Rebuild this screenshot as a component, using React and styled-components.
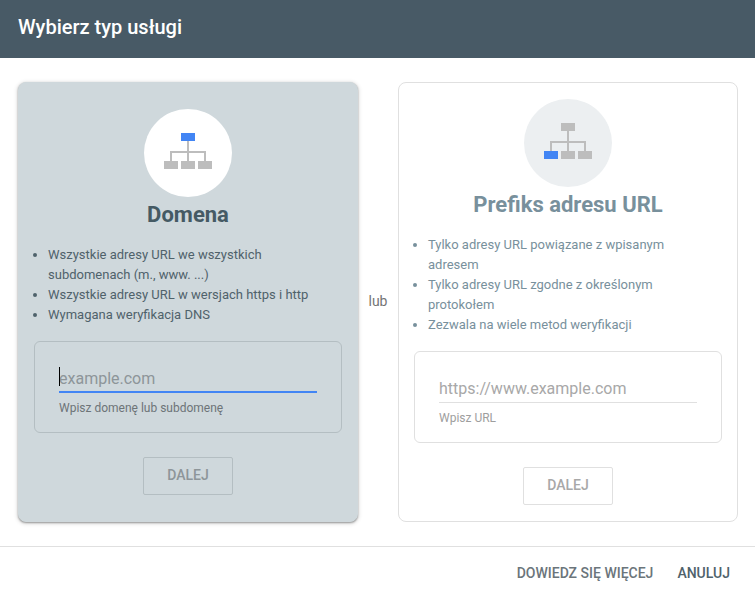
import React from "react";
import styled, { createGlobalStyle } from "styled-components";

const GlobalStyle = createGlobalStyle`
  html, body {
    margin: 0;
    padding: 0;
    background: #fff;
    font-family: Roboto, "Liberation Sans", sans-serif;
  }
  * {
    box-sizing: border-box;
  }
`;

const Page = styled.div`
  width: 755px;
  height: 595px;
  display: flex;
  flex-direction: column;
  overflow: hidden;
`;

const Header = styled.header`
  height: 58px;
  flex: none;
  display: flex;
  align-items: center;
  padding: 0 18px;
  background-color: #485a66;
  color: #fff;
`;

const Title = styled.h1`
  margin: 0 0 4px;
  font-size: 20px;
  font-weight: 500;
`;

const Main = styled.main`
  flex: 1;
  display: flex;
  align-items: stretch;
  padding: 24px 17px 24px 18px;
`;

const Card = styled.section`
  width: 340px;
  flex: none;
  display: flex;
  flex-direction: column;
  align-items: center;
  justify-content: center;
  border-radius: 8px;
  border: 1px solid ${(props) => (props.$active ? "#cfd8dc" : "#e0e0e0")};
  background-color: ${(props) => (props.$active ? "#cfd8dc" : "#fff")};
  box-shadow: ${(props) =>
    props.$active
      ? "0 1px 2px rgba(0,0,0,.35), 0 1px 4px 1px rgba(0,0,0,.12)"
      : "none"};
`;

const Or = styled.div`
  flex: 1;
  display: flex;
  align-items: center;
  justify-content: center;
  font-size: 14px;
  color: #757575;
  padding-bottom: 2px;
`;

const IconCircle = styled.div`
  width: 88px;
  height: 88px;
  display: flex;
  align-items: center;
  justify-content: center;
  border-radius: 50%;
  background-color: ${(props) => (props.$active ? "#fff" : "#eceff1")};
`;

const TreeSvg = styled.svg`
  display: block;
  margin-bottom: 4px;
`;

const CardTitle = styled.h2`
  margin: 3px 0 0;
  height: 30px;
  line-height: 30px;
  font-size: 22px;
  font-weight: 700;
  color: ${(props) => (props.$active ? "#455a64" : "#78909c")};
`;

const Features = styled.ul`
  align-self: stretch;
  margin: 15px 0 16px;
  padding: 0 29px;
  font-size: 13px;
  line-height: 20px;
  color: ${(props) => (props.$active ? "#4f626b" : "#78909c")};
`;

const InputBox = styled.div`
  width: 308px;
  height: 92px;
  padding: 24px 24px 0;
  border-radius: 6px;
  border: 1px solid ${(props) => (props.$active ? "#b4bec2" : "#e0e0e0")};
`;

const Field = styled.div`
  position: relative;
  height: 27px;
  border-bottom: ${(props) =>
    props.$active ? "2px solid #4285f4" : "1px solid #e0e0e0"};

  ${(props) =>
    props.$active &&
    `
    &::before {
      content: "";
      position: absolute;
      left: 0;
      top: 1px;
      width: 1px;
      height: 19px;
      background: #000;
    }
  `}
`;

const TextInput = styled.input`
  display: block;
  width: 100%;
  height: 24px;
  margin: 0;
  padding: 0;
  border: 0;
  outline: 0;
  background: transparent;
  font-family: inherit;
  font-size: 16px;

  &::placeholder {
    opacity: 1;
    color: ${(props) => (props.$active ? "#8d9599" : "#a8a8a8")};
  }
`;

const Helper = styled.div`
  margin-top: 7px;
  font-size: 12px;
  line-height: 16px;
  color: ${(props) => (props.$active ? "#6d7478" : "#9e9e9e")};
`;

const NextButton = styled.button`
  width: 90px;
  height: 38px;
  margin-top: 24px;
  padding: 0 0 2px;
  border-radius: 2px;
  border: 1px solid ${(props) => (props.$active ? "#b4bec2" : "#e0e0e0")};
  background: transparent;
  font-family: inherit;
  font-size: 14px;
  font-weight: 500;
  color: ${(props) => (props.$active ? "#8d9599" : "#a8a8a8")};
`;

const Footer = styled.footer`
  height: 49px;
  flex: none;
  display: flex;
  align-items: center;
  justify-content: flex-end;
  gap: 24px;
  padding: 3px 25px 0 0;
  border-top: 1px solid #e0e0e0;
`;

const FooterButton = styled.button`
  padding: 0;
  border: 0;
  background: none;
  font-family: inherit;
  font-size: 14px;
  font-weight: 500;
  color: ${(props) => (props.$primary ? "#4f626b" : "#6b757b")};
`;

function TreeIcon({ highlight }) {
  const boxes = [
    { id: "top", x: 17, y: 0 },
    { id: "left", x: 0, y: 28 },
    { id: "middle", x: 17, y: 28 },
    { id: "right", x: 34, y: 28 },
  ];

  return (
    <TreeSvg width="48" height="36" viewBox="0 0 48 36" aria-hidden="true">
      <path
        d="M24 8v20M7 28v-9h34v9"
        fill="none"
        stroke="#bdbdbd"
        strokeWidth="2"
      />
      {boxes.map((box) => (
        <rect
          key={box.id}
          x={box.x}
          y={box.y}
          width="14"
          height="8"
          fill={box.id === highlight ? "#4285f4" : "#bdbdbd"}
        />
      ))}
    </TreeSvg>
  );
}

function ServiceCard({ active, highlight, title, features, placeholder, helper }) {
  return (
    <Card $active={active}>
      <IconCircle $active={active}>
        <TreeIcon highlight={highlight} />
      </IconCircle>
      <CardTitle $active={active}>{title}</CardTitle>
      <Features $active={active}>
        {features.map((feature) => (
          <li key={feature}>{feature}</li>
        ))}
      </Features>
      <InputBox $active={active}>
        <Field $active={active}>
          <TextInput $active={active} placeholder={placeholder} readOnly />
        </Field>
        <Helper $active={active}>{helper}</Helper>
      </InputBox>
      <NextButton $active={active}>DALEJ</NextButton>
    </Card>
  );
}

export default function App() {
  return (
    <Page>
      <GlobalStyle />
      <Header>
        <Title>Wybierz typ usługi</Title>
      </Header>
      <Main>
        <ServiceCard
          active
          highlight="top"
          title="Domena"
          features={[
            "Wszystkie adresy URL we wszystkich subdomenach (m., www. ...)",
            "Wszystkie adresy URL w wersjach https i http",
            "Wymagana weryfikacja DNS",
          ]}
          placeholder="example.com"
          helper="Wpisz domenę lub subdomenę"
        />
        <Or>lub</Or>
        <ServiceCard
          highlight="left"
          title="Prefiks adresu URL"
          features={[
            "Tylko adresy URL powiązane z wpisanym adresem",
            "Tylko adresy URL zgodne z określonym protokołem",
            "Zezwala na wiele metod weryfikacji",
          ]}
          placeholder="https://www.example.com"
          helper="Wpisz URL"
        />
      </Main>
      <Footer>
        <FooterButton>DOWIEDZ SIĘ WIĘCEJ</FooterButton>
        <FooterButton $primary>ANULUJ</FooterButton>
      </Footer>
    </Page>
  );
}
